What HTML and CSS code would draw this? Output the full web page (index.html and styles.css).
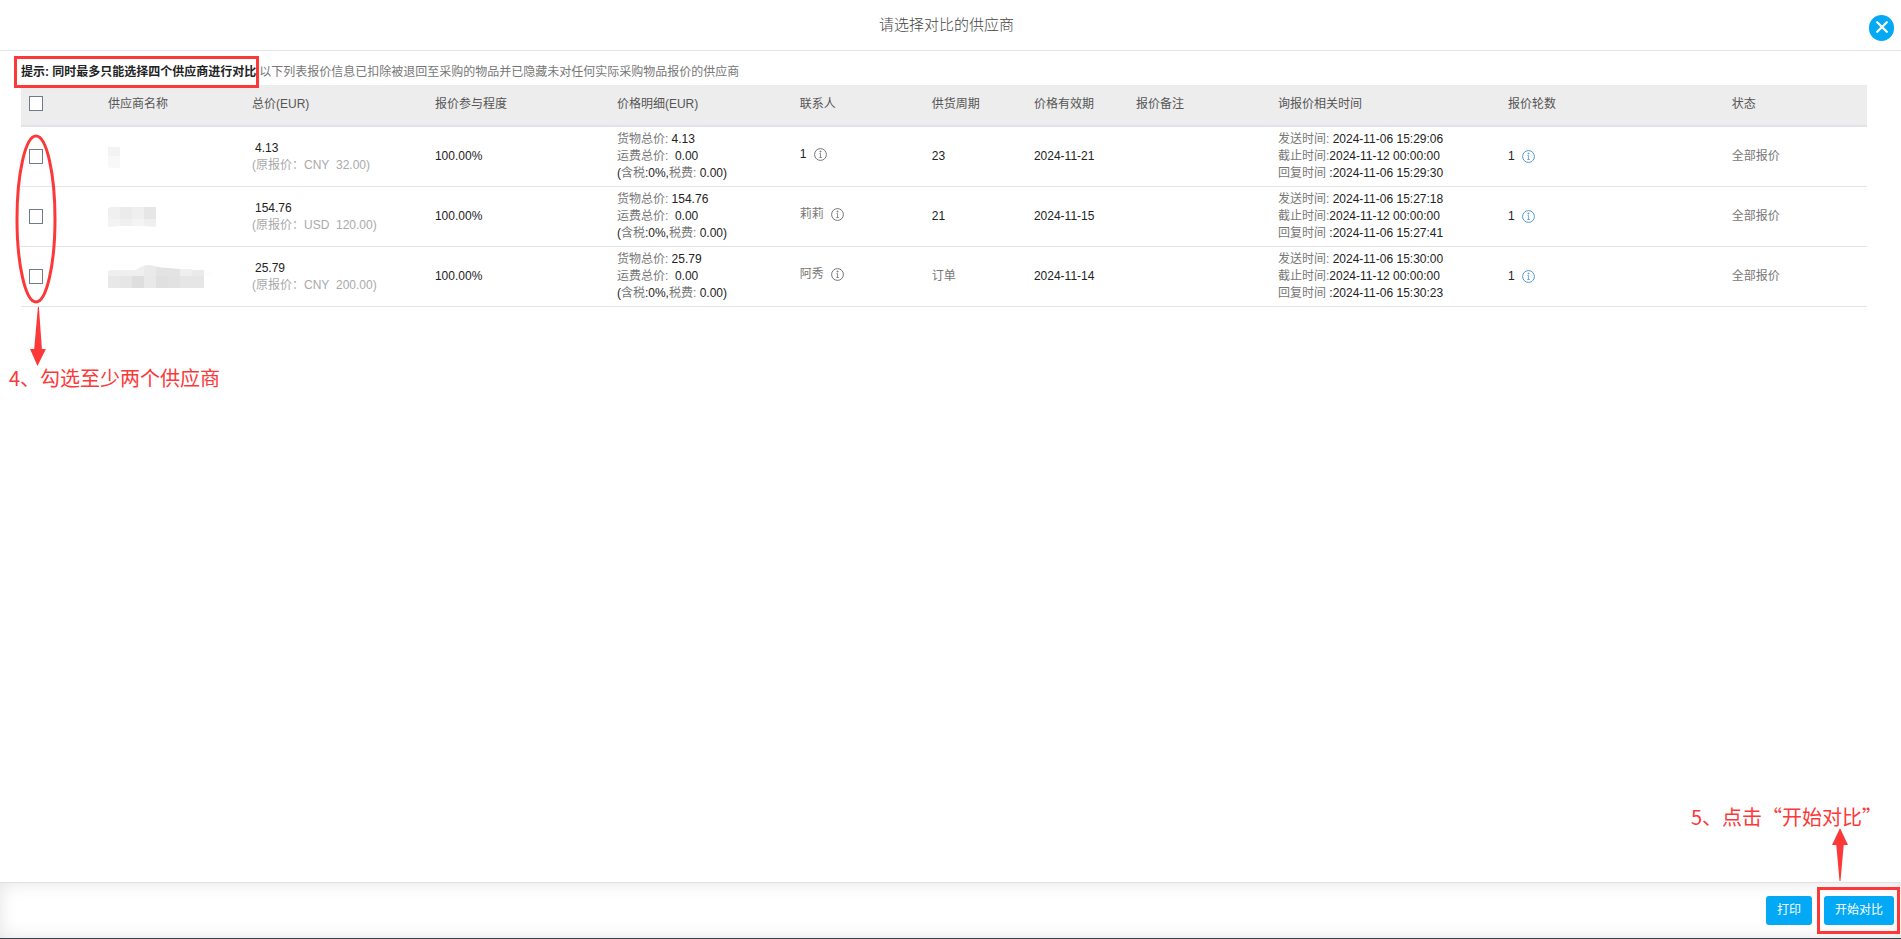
FILE: index.html
```html
<!DOCTYPE html>
<html lang="zh-CN">
<head>
<meta charset="utf-8">
<title>请选择对比的供应商</title>
<link rel="stylesheet" href="styles.css">
</head>
<body>
<svg class="defs" width="0" height="0" aria-hidden="true">
  <symbol id="info" viewBox="0 0 13 13">
    <circle cx="6.5" cy="6.5" r="5.9" fill="none" stroke="currentColor" stroke-width=".9"/>
    <path d="M6 3h1v1H6zM5.500 5.500h1v4M5.300 9.500h2.600" fill="none" stroke="currentColor" stroke-width=".7"/>
  </symbol>
</svg>
<div class="dialog">
  <header class="dialog-header">
    <h1 class="title">请选择对比的供应商</h1>
    <button class="close" type="button" aria-label="关闭">
      <svg width="12" height="12" viewBox="0 0 12 12"><path d="M1.2 1.2l9.6 9.6M10.8 1.2L1.2 10.8" stroke="#fff" stroke-width="2.2" stroke-linecap="round"/></svg>
    </button>
  </header>
  <main class="content">
    <p class="hint"><strong class="hint-key">提示: 同时最多只能选择四个供应商进行对比</strong><span>以下列表报价信息已扣除被退回至采购的物品并已隐藏未对任何实际采购物品报价的供应商</span></p>
    <div class="table-wrap">
      <table class="suppliers">
        <colgroup>
          <col class="c-check"><col class="c-name"><col class="c-total"><col class="c-part"><col class="c-detail"><col class="c-contact"><col class="c-cycle"><col class="c-valid"><col class="c-note"><col class="c-time"><col class="c-round"><col class="c-state">
        </colgroup>
        <thead>
          <tr>
            <th><input class="check" type="checkbox" aria-label="全选"></th>
            <th>供应商名称</th><th>总价(EUR)</th><th>报价参与程度</th><th>价格明细(EUR)</th><th>联系人</th><th>供货周期</th><th>价格有效期</th><th>报价备注</th><th>询报价相关时间</th><th>报价轮数</th><th>状态</th>
          </tr>
        </thead>
        <tbody>
          <tr>
            <td><input class="check" type="checkbox" aria-label="选择供应商 1"></td>
            <td><svg class="mosaic" width="12" height="22" viewBox="0 0 12 22"><path d="M0 0l4 1h8v9H0z" fill="#f3f3f3"/><path d="M0 10h12v12H4l-4-1z" fill="#f8f8f8"/></svg></td>
            <td><div class="amount">4.13</div><div class="origin">(原报价：<b>CNY&nbsp; 32.00)</b></div></td>
            <td>100.00%</td>
            <td><span class="label">货物总价:</span> 4.13<br><span class="label">运费总价:</span>&nbsp; 0.00<br>(<span class="label">含税</span>:0%,<span class="label">税费:</span> 0.00)</td>
            <td><div class="contact">1 <svg class="info"><use href="#info"/></svg></div></td>
            <td>23</td><td>2024-11-21</td><td></td>
            <td><span class="label">发送时间:</span> 2024-11-06 15:29:06<br><span class="label">截止时间:</span>2024-11-12 00:00:00<br><span class="label">回复时间</span> :2024-11-06 15:29:30</td>
            <td><div class="round">1 <svg class="info info-link"><use href="#info"/></svg></div></td>
            <td class="label">全部报价</td>
          </tr>
          <tr>
            <td><input class="check" type="checkbox" aria-label="选择供应商 2"></td>
            <td><svg class="mosaic" width="48" height="20" viewBox="0 0 48 20"><path d="M0 1l3-1h9v12H0z" fill="#f0f0f0"/><path d="M12 0h12v12H12z" fill="#ebebeb"/><path d="M24 0h12v12H24z" fill="#efefef"/><path d="M36 0h12v12H36z" fill="#e6e6e6"/><path d="M0 12h12v7L0 20z" fill="#f3f3f3"/><path d="M12 12h12v7H12z" fill="#f0f0f0"/><path d="M24 12h12v7H24z" fill="#f4f4f4"/><path d="M36 12h12v8l-12-1z" fill="#efefef"/></svg></td>
            <td><div class="amount">154.76</div><div class="origin">(原报价：<b>USD&nbsp; 120.00)</b></div></td>
            <td>100.00%</td>
            <td><span class="label">货物总价:</span> 154.76<br><span class="label">运费总价:</span>&nbsp; 0.00<br>(<span class="label">含税</span>:0%,<span class="label">税费:</span> 0.00)</td>
            <td><div class="contact"><span class="label">莉莉</span> <svg class="info"><use href="#info"/></svg></div></td>
            <td>21</td><td>2024-11-15</td><td></td>
            <td><span class="label">发送时间:</span> 2024-11-06 15:27:18<br><span class="label">截止时间:</span>2024-11-12 00:00:00<br><span class="label">回复时间</span> :2024-11-06 15:27:41</td>
            <td><div class="round">1 <svg class="info info-link"><use href="#info"/></svg></div></td>
            <td class="label">全部报价</td>
          </tr>
          <tr>
            <td><input class="check" type="checkbox" aria-label="选择供应商 3"></td>
            <td><svg class="mosaic" width="108" height="23" viewBox="0 0 108 23"><path d="M0 6l3-1h25q6-5 13-5l11 2v9H0z" fill="#efefef"/><path d="M36 1q8-2 12 1v9H36z" fill="#eaeaea"/><path d="M48 2l24 2v7H48z" fill="#e3e3e3"/><path d="M72 4h12v7H72z" fill="#efefef"/><path d="M84 5h12v6H84z" fill="#eaeaea"/><path d="M96 6l10 4H96z" fill="#fcfcfc"/><path d="M0 11h12v12H0z" fill="#e8e8e8"/><path d="M12 11h12v12H12z" fill="#e6e6e6"/><path d="M24 11h12v12H24z" fill="#dedede"/><path d="M36 11h12v12H36z" fill="#e9e9e9"/><path d="M48 11h12v12H48z" fill="#e0e0e0"/><path d="M60 11h12v12H60z" fill="#e2e2e2"/><path d="M72 11h24v12H72z" fill="#e6e6e6"/></svg></td>
            <td><div class="amount">25.79</div><div class="origin">(原报价：<b>CNY&nbsp; 200.00)</b></div></td>
            <td>100.00%</td>
            <td><span class="label">货物总价:</span> 25.79<br><span class="label">运费总价:</span>&nbsp; 0.00<br>(<span class="label">含税</span>:0%,<span class="label">税费:</span> 0.00)</td>
            <td><div class="contact"><span class="label">阿秀</span> <svg class="info"><use href="#info"/></svg></div></td>
            <td class="label">订单</td><td>2024-11-14</td><td></td>
            <td><span class="label">发送时间:</span> 2024-11-06 15:30:00<br><span class="label">截止时间:</span>2024-11-12 00:00:00<br><span class="label">回复时间</span> :2024-11-06 15:30:23</td>
            <td><div class="round">1 <svg class="info info-link"><use href="#info"/></svg></div></td>
            <td class="label">全部报价</td>
          </tr>
        </tbody>
      </table>
      <svg class="mark-select" width="44" height="234" viewBox="0 0 44 234"><ellipse cx="21" cy="85" rx="19" ry="83" fill="none" stroke="#fd3838" stroke-width="3"/><path d="M22.9 173h1l3 42h4l-8.400 17-7.500-17h4.200z" fill="#fd3838"/></svg>
      <p class="note note-select">4、勾选至少两个供应商</p>
    </div>
  </main>
  <footer class="dialog-footer">
    <button class="btn" type="button">打印</button>
    <div class="start">
      <button class="btn" type="button">开始对比</button>
      <svg class="mark-start" width="16" height="54" viewBox="0 0 16 54"><path d="M8 0l8 17h-4.300L8.500 53h-1L4.300 17H0z" fill="#fd3838"/></svg>
      <p class="note note-start">5、点击“开始对比”</p>
    </div>
  </footer>
</div>
</body>
</html>
```
FILE: styles.css
```css
* { box-sizing: border-box; }
body {
  margin: 0;
  font: 12px/17px "Liberation Sans", "Noto Sans CJK SC", sans-serif;
  color: #222;
  background: #fff;
}
p, h1 { margin: 0; }
.defs { position: absolute; }
.dialog {
  display: flex;
  flex-direction: column;
  min-height: 100vh;
  border-bottom: 1px solid #37424a;
  overflow: hidden;
}
.dialog-header {
  position: relative;
  padding: 13px 8px 13px 0;
  border-bottom: 1px solid #e2e4e7;
  text-align: center;
}
.title {
  font-size: 15px;
  line-height: 24px;
  font-weight: 300;
  color: #444;
}
.close {
  position: absolute;
  top: 15px;
  right: 7px;
  width: 25px;
  height: 26px;
  padding: 0 0 2px;
  border: 0;
  border-radius: 13px;
  background: #03a9f5;
  display: flex;
  align-items: center;
  justify-content: center;
}
.content { flex: 1; padding: 5px 34px 0 14px; }
.hint {
  position: relative;
  z-index: 1;
  display: flex;
  line-height: 26px;
  color: #777;
  white-space: nowrap;
}
.hint-key {
  padding: 0 0 0 4px;
  border: 3px solid #fd3838;
  color: #222;
}
.hint span { padding-top: 3px; }
.table-wrap { position: relative; margin: -3px 0 0 7px; }
.suppliers { width: 100%; border-collapse: collapse; table-layout: fixed; }
.c-check { width: 4.28%; }
.c-name { width: 7.8%; }
.c-total { width: 9.91%; }
.c-part { width: 9.86%; }
.c-detail { width: 9.91%; }
.c-contact { width: 7.15%; }
.c-cycle { width: 5.53%; }
.c-valid { width: 5.53%; }
.c-note { width: 7.69%; }
.c-time { width: 12.46%; }
.c-round { width: 12.13%; }
.c-state { width: 7.75%; }
.suppliers th {
  padding: 11px 8px 12px;
  background: #ededed;
  border-bottom: 2px solid #e0e4e8;
  font-weight: 400;
  text-align: left;
  color: #555;
}
.suppliers td {
  padding: 4px 8px;
  border-bottom: 1px solid #e3e4e6;
  white-space: nowrap;
}
.suppliers .label { color: #777; }
.check {
  appearance: none;
  display: block;
  width: 14px;
  height: 15px;
  margin: 0;
  border: 1px solid #6f7b8a;
  background: #fff;
}
.suppliers th .check { margin-bottom: 2px; }
.mosaic { display: block; }
.amount { padding-left: 3px; }
.origin { color: #aaa; }
.origin b { font-weight: 400; }
.contact, .round { display: flex; align-items: center; gap: 7px; }
.contact { padding-bottom: 5px; }
.info { width: 13px; height: 13px; color: #666; }
.info-link { color: #3f8fcb; }
.mark-select { position: absolute; top: 49px; left: -6px; }
.note {
  position: absolute;
  font: 20px/28px "Noto Sans CJK SC", sans-serif;
  color: #fd3838;
  white-space: nowrap;
}
.note-select { top: 279px; left: -12px; }
.dialog-footer {
  display: flex;
  justify-content: flex-end;
  gap: 12px;
  padding: 13px 7px 13px 0;
  border-top: 1px solid #e0e0e0;
  box-shadow: inset 0 0 18px #e4e4e4;
}
.btn {
  display: block;
  padding: 6px 11px;
  border: 0;
  border-radius: 3px;
  background: #03a9f5;
  color: #fff;
  font: inherit;
}
.start { position: relative; }
.start::before {
  content: "";
  position: absolute;
  inset: -9px -6px -9px -7px;
  border: 3px solid #fd3838;
}
.mark-start { position: absolute; top: -68px; left: 8px; }
.note-start { top: -93px; right: 12px; }
```
